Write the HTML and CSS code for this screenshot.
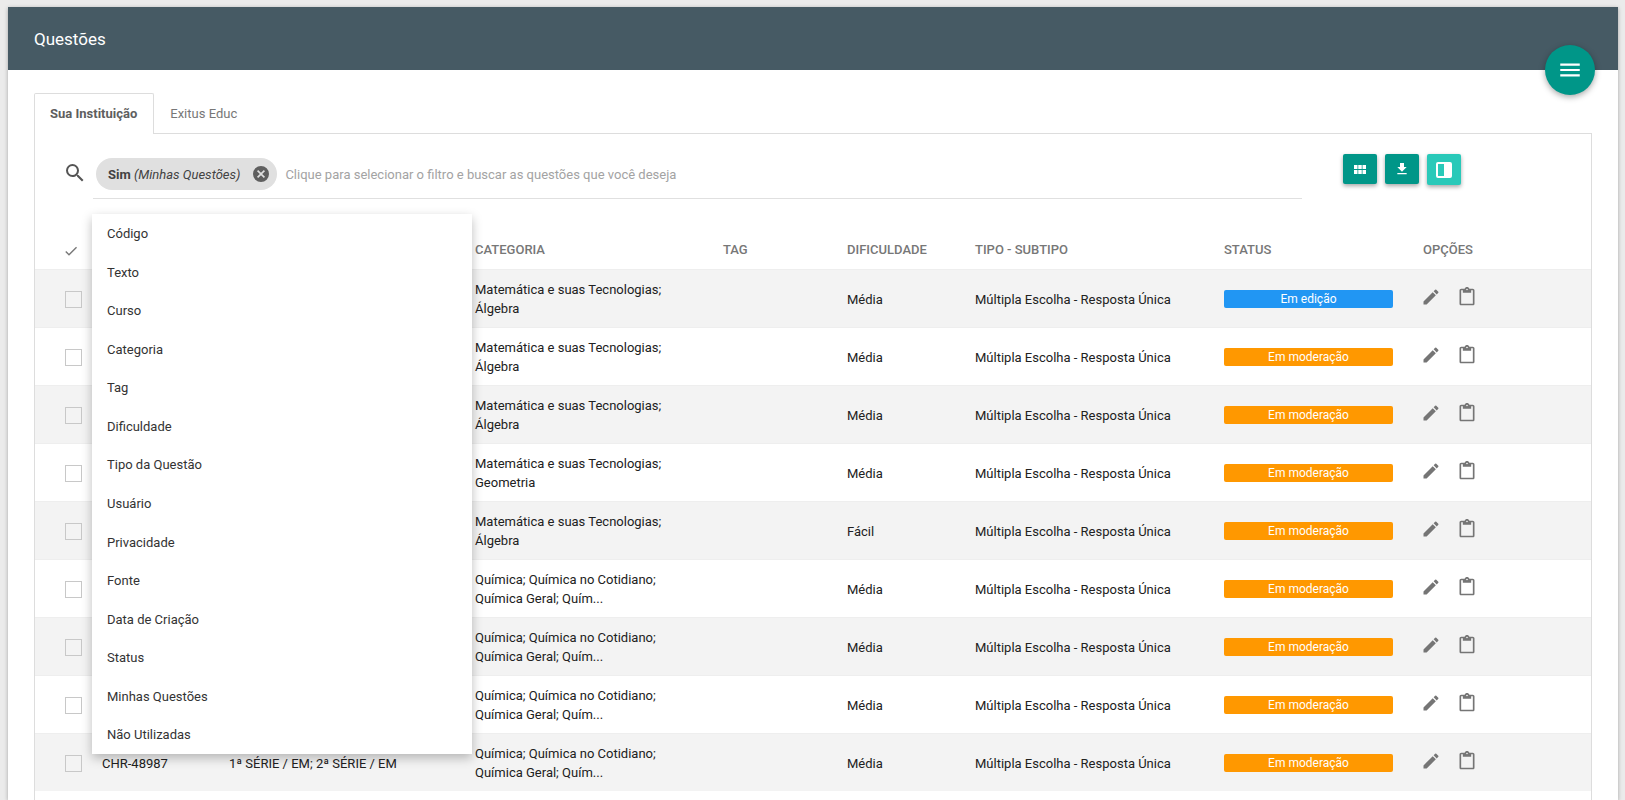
FILE: index.html
```html
<!DOCTYPE html>
<html lang="pt-BR">
<head>
<meta charset="utf-8">
<title>Questões</title>
<link rel="stylesheet" href="styles.css">
</head>
<body>
<svg class="sprite" aria-hidden="true">
  <symbol id="i-menu" viewBox="0 0 24 24"><path d="M3 18h18v-2H3v2zm0-5h18v-2H3v2zm0-7v2h18V6H3z"/></symbol>
  <symbol id="i-search" viewBox="0 0 24 24"><path d="M15.5 14h-.79l-.28-.27A6.471 6.471 0 0 0 16 9.5 6.5 6.5 0 1 0 9.5 16c1.61 0 3.09-.59 4.23-1.57l.27.28v.79l5 4.99L20.49 19l-4.99-5zm-6 0C7.01 14 5 11.99 5 9.5S7.01 5 9.5 5 14 7.01 14 9.5 11.99 14 9.5 14z"/></symbol>
  <symbol id="i-close" viewBox="0 0 24 24"><path d="M12 0a12 12 0 1 0 0 24 12 12 0 0 0 0-24zm6 16.3L16.3 18 12 13.7 7.7 18 6 16.3l4.3-4.3L6 7.7 7.7 6l4.3 4.3L16.3 6 18 7.7 13.7 12z"/></symbol>
  <symbol id="i-check" viewBox="0 0 24 24"><path d="M9 16.17L4.83 12l-1.42 1.41L9 19 21 7l-1.41-1.41z"/></symbol>
  <symbol id="i-grid" viewBox="0 0 12 9"><path d="M0 0h3.5v4H0zM4.25 0h3.5v4h-3.5zM8.5 0H12v4H8.5zM0 5h3.5v4H0zM4.25 5h3.5v4h-3.5zM8.5 5H12v4H8.5z"/></symbol>
  <symbol id="i-download" viewBox="0 0 24 24"><path d="M19 9h-4V3H9v6H5l7 7 7-7zM5 18v2h14v-2H5z"/></symbol>
  <symbol id="i-split" viewBox="0 0 16 16"><path d="M2 0h12a2 2 0 0 1 2 2v12a2 2 0 0 1-2 2H2a2 2 0 0 1-2-2V2a2 2 0 0 1 2-2zm0 2v12h6V2z" fill-rule="evenodd"/></symbol>
  <symbol id="i-edit" viewBox="0 0 24 24"><path d="M3 17.25V21h3.75L17.81 9.94l-3.75-3.75L3 17.25zM20.71 7.04a.996.996 0 0 0 0-1.41l-2.34-2.34a.996.996 0 0 0-1.41 0l-1.83 1.83 3.75 3.75 1.83-1.83z"/></symbol>
  <symbol id="i-clip" viewBox="0 0 24 24"><path d="M19 2h-4.18C14.4.84 13.3 0 12 0c-1.3 0-2.4.84-2.82 2H5c-1.1 0-2 .9-2 2v16c0 1.1.9 2 2 2h14c1.1 0 2-.9 2-2V4c0-1.1-.9-2-2-2zm-7 0c.55 0 1 .45 1 1s-.45 1-1 1-1-.45-1-1 .45-1 1-1zm7 18H5V4h2v3h10V4h2v16z"/></symbol>
</svg>
<main class="card">
  <header class="card-header">
    <h1 class="title">Questões</h1>
    <button class="fab" type="button" aria-label="Menu"><svg class="fab-icon"><use href="#i-menu"/></svg></button>
  </header>
  <div class="card-body">
    <nav class="tabs">
      <a class="tab tab-active" href="#instituicao">Sua Instituição</a>
      <a class="tab" href="#exitus">Exitus Educ</a>
    </nav>
    <section class="panel" id="instituicao">
      <div class="toolbar">
        <label class="search-label" for="filtro" aria-label="Buscar"><svg class="search-icon"><use href="#i-search"/></svg></label>
        <div class="field">
          <span class="chip"><span><strong>Sim</strong> <em>(Minhas Questões)</em></span><button class="chip-close" type="button" aria-label="Remover"><svg class="chip-icon"><use href="#i-close"/></svg></button></span>
          <input class="filter" id="filtro" type="text" placeholder="Clique para selecionar o filtro e buscar as questões que você deseja">
          <ul class="menu">
            <li><a class="menu-item" href="#">Código</a></li>
            <li><a class="menu-item" href="#">Texto</a></li>
            <li><a class="menu-item" href="#">Curso</a></li>
            <li><a class="menu-item" href="#">Categoria</a></li>
            <li><a class="menu-item" href="#">Tag</a></li>
            <li><a class="menu-item" href="#">Dificuldade</a></li>
            <li><a class="menu-item" href="#">Tipo da Questão</a></li>
            <li><a class="menu-item" href="#">Usuário</a></li>
            <li><a class="menu-item" href="#">Privacidade</a></li>
            <li><a class="menu-item" href="#">Fonte</a></li>
            <li><a class="menu-item" href="#">Data de Criação</a></li>
            <li><a class="menu-item" href="#">Status</a></li>
            <li><a class="menu-item" href="#">Minhas Questões</a></li>
            <li><a class="menu-item" href="#">Não Utilizadas</a></li>
          </ul>
        </div>
        <div class="tools">
          <button class="tool" type="button" aria-label="Grade"><svg class="tool-grid"><use href="#i-grid"/></svg></button>
          <button class="tool" type="button" aria-label="Baixar"><svg class="tool-download"><use href="#i-download"/></svg></button>
          <button class="tool tool-light" type="button" aria-label="Dividir"><svg class="tool-split"><use href="#i-split"/></svg></button>
        </div>
      </div>
      <table class="grid">
        <colgroup><col class="c-check"><col class="c-code"><col class="c-course"><col><col class="c-tag"><col class="c-level"><col class="c-type"><col class="c-status"><col class="c-options"></colgroup>
        <thead>
          <tr><th class="check-head"><svg class="check-icon"><use href="#i-check"/></svg></th><th></th><th></th><th>CATEGORIA</th><th>TAG</th><th>DIFICULDADE</th><th>TIPO - SUBTIPO</th><th>STATUS</th><th>OPÇÕES</th></tr>
        </thead>
        <tbody>
          <tr><td class="check-cell"><input class="check" type="checkbox" aria-label="Selecionar"></td><td></td><td></td><td>Matemática e suas Tecnologias; Álgebra</td><td></td><td>Média</td><td>Múltipla Escolha - Resposta Única</td><td class="status-cell"><span class="badge badge-edit">Em edição</span></td><td class="action-cell"><div class="actions"><button class="action" type="button" aria-label="Editar"><svg class="action-icon"><use href="#i-edit"/></svg></button><button class="action" type="button" aria-label="Copiar"><svg class="action-icon"><use href="#i-clip"/></svg></button></div></td></tr>
          <tr><td class="check-cell"><input class="check" type="checkbox" aria-label="Selecionar"></td><td></td><td></td><td>Matemática e suas Tecnologias; Álgebra</td><td></td><td>Média</td><td>Múltipla Escolha - Resposta Única</td><td class="status-cell"><span class="badge">Em moderação</span></td><td class="action-cell"><div class="actions"><button class="action" type="button" aria-label="Editar"><svg class="action-icon"><use href="#i-edit"/></svg></button><button class="action" type="button" aria-label="Copiar"><svg class="action-icon"><use href="#i-clip"/></svg></button></div></td></tr>
          <tr><td class="check-cell"><input class="check" type="checkbox" aria-label="Selecionar"></td><td></td><td></td><td>Matemática e suas Tecnologias; Álgebra</td><td></td><td>Média</td><td>Múltipla Escolha - Resposta Única</td><td class="status-cell"><span class="badge">Em moderação</span></td><td class="action-cell"><div class="actions"><button class="action" type="button" aria-label="Editar"><svg class="action-icon"><use href="#i-edit"/></svg></button><button class="action" type="button" aria-label="Copiar"><svg class="action-icon"><use href="#i-clip"/></svg></button></div></td></tr>
          <tr><td class="check-cell"><input class="check" type="checkbox" aria-label="Selecionar"></td><td></td><td></td><td>Matemática e suas Tecnologias; Geometria</td><td></td><td>Média</td><td>Múltipla Escolha - Resposta Única</td><td class="status-cell"><span class="badge">Em moderação</span></td><td class="action-cell"><div class="actions"><button class="action" type="button" aria-label="Editar"><svg class="action-icon"><use href="#i-edit"/></svg></button><button class="action" type="button" aria-label="Copiar"><svg class="action-icon"><use href="#i-clip"/></svg></button></div></td></tr>
          <tr><td class="check-cell"><input class="check" type="checkbox" aria-label="Selecionar"></td><td></td><td></td><td>Matemática e suas Tecnologias; Álgebra</td><td></td><td>Fácil</td><td>Múltipla Escolha - Resposta Única</td><td class="status-cell"><span class="badge">Em moderação</span></td><td class="action-cell"><div class="actions"><button class="action" type="button" aria-label="Editar"><svg class="action-icon"><use href="#i-edit"/></svg></button><button class="action" type="button" aria-label="Copiar"><svg class="action-icon"><use href="#i-clip"/></svg></button></div></td></tr>
          <tr><td class="check-cell"><input class="check" type="checkbox" aria-label="Selecionar"></td><td></td><td></td><td>Química; Química no Cotidiano; Química Geral; Quím...</td><td></td><td>Média</td><td>Múltipla Escolha - Resposta Única</td><td class="status-cell"><span class="badge">Em moderação</span></td><td class="action-cell"><div class="actions"><button class="action" type="button" aria-label="Editar"><svg class="action-icon"><use href="#i-edit"/></svg></button><button class="action" type="button" aria-label="Copiar"><svg class="action-icon"><use href="#i-clip"/></svg></button></div></td></tr>
          <tr><td class="check-cell"><input class="check" type="checkbox" aria-label="Selecionar"></td><td></td><td></td><td>Química; Química no Cotidiano; Química Geral; Quím...</td><td></td><td>Média</td><td>Múltipla Escolha - Resposta Única</td><td class="status-cell"><span class="badge">Em moderação</span></td><td class="action-cell"><div class="actions"><button class="action" type="button" aria-label="Editar"><svg class="action-icon"><use href="#i-edit"/></svg></button><button class="action" type="button" aria-label="Copiar"><svg class="action-icon"><use href="#i-clip"/></svg></button></div></td></tr>
          <tr><td class="check-cell"><input class="check" type="checkbox" aria-label="Selecionar"></td><td></td><td></td><td>Química; Química no Cotidiano; Química Geral; Quím...</td><td></td><td>Média</td><td>Múltipla Escolha - Resposta Única</td><td class="status-cell"><span class="badge">Em moderação</span></td><td class="action-cell"><div class="actions"><button class="action" type="button" aria-label="Editar"><svg class="action-icon"><use href="#i-edit"/></svg></button><button class="action" type="button" aria-label="Copiar"><svg class="action-icon"><use href="#i-clip"/></svg></button></div></td></tr>
          <tr><td class="check-cell"><input class="check" type="checkbox" aria-label="Selecionar"></td><td>CHR-48987</td><td>1ª SÉRIE / EM; 2ª SÉRIE / EM</td><td>Química; Química no Cotidiano; Química Geral; Quím...</td><td></td><td>Média</td><td>Múltipla Escolha - Resposta Única</td><td class="status-cell"><span class="badge">Em moderação</span></td><td class="action-cell"><div class="actions"><button class="action" type="button" aria-label="Editar"><svg class="action-icon"><use href="#i-edit"/></svg></button><button class="action" type="button" aria-label="Copiar"><svg class="action-icon"><use href="#i-clip"/></svg></button></div></td></tr>
        </tbody>
      </table>
    </section>
  </div>
</main>
</body>
</html>
```
FILE: styles.css
```css
* { box-sizing: border-box; }

body {
  margin: 0;
  min-height: 100vh;
  padding: 7px 7px 0 8px;
  display: flex;
  flex-direction: column;
  background: #ebebeb;
  color: #212121;
  font: 13px/19px Roboto, sans-serif;
}

button {
  margin: 0;
  padding: 0;
  border: 0;
  background: none;
  cursor: pointer;
}

a { text-decoration: none; }

svg {
  display: block;
  fill: currentColor;
}

.sprite {
  position: absolute;
  width: 0;
  height: 0;
}

.card {
  flex: 1;
  display: flex;
  flex-direction: column;
  background: #fff;
  box-shadow: 0 1px 4px rgba(0, 0, 0, .3);
}

.card-header {
  position: relative;
  padding: 21px 26px 19px;
  background: #465a64;
  color: #fff;
}

.title {
  margin: 0;
  font-size: 17px;
  font-weight: 400;
  line-height: 23px;
}

.fab {
  position: absolute;
  right: 23px;
  bottom: -25px;
  width: 50px;
  height: 50px;
  display: grid;
  place-items: center;
  border-radius: 50%;
  background: #009688;
  color: #fff;
  box-shadow: 0 2px 6px rgba(0, 0, 0, .35);
}

.fab-icon { width: 26px; height: 26px; }

.card-body {
  flex: 1;
  display: flex;
  flex-direction: column;
  padding: 23px 26px 0;
}

.tabs { display: flex; }

.tab {
  padding: 10px 16px 10px 15px;
  border: 1px solid transparent;
  border-bottom: 0;
  color: #777;
}

.tab-active {
  position: relative;
  z-index: 1;
  margin-bottom: -1px;
  padding-bottom: 11px;
  border-color: #ddd;
  border-radius: 2px 2px 0 0;
  background: #fff;
  color: #5e5e5e;
  font-weight: 700;
}

.panel {
  flex: 1;
  border: 1px solid #ddd;
  border-bottom: 0;
}

.toolbar {
  display: flex;
  align-items: flex-start;
  padding: 20px 130px 0 28px;
}

.search-label { padding: 7px 6px 0 0; }

.search-icon {
  width: 24px;
  height: 24px;
  color: #555;
}

.field {
  position: relative;
  flex: 1;
  display: flex;
  align-items: center;
  gap: 8px;
  margin-right: 41px;
  padding: 4px 0 8px 3px;
  border-bottom: 1px solid #e0e0e0;
}

.chip {
  display: flex;
  align-items: center;
  gap: 13px;
  height: 32px;
  padding: 0 8px 0 12px;
  border-radius: 16px;
  background: #e0e0e0;
  color: #424242;
  white-space: nowrap;
}

.chip-close { color: #5f5f5f; }

.chip-icon { width: 16px; height: 16px; }

.filter {
  flex: 1;
  min-width: 0;
  padding: 0;
  border: 0;
  outline: 0;
  background: none;
  font: inherit;
}

.filter::placeholder { color: #a3a3a3; }

.menu {
  position: absolute;
  z-index: 2;
  top: 60px;
  left: -1px;
  width: 380px;
  min-height: 540px;
  display: grid;
  grid-auto-rows: 1fr;
  margin: 0;
  padding: 0;
  list-style: none;
  background: #fff;
  box-shadow: 0 4px 10px rgba(0, 0, 0, .26);
}

.menu-item {
  display: block;
  padding: 10px 15px 9px;
  color: #333;
}

.tools {
  display: flex;
  align-items: flex-start;
  gap: 8px;
}

.tool {
  width: 34px;
  height: 30px;
  display: grid;
  place-items: center;
  border-radius: 2px;
  background: #009688;
  color: #fff;
  box-shadow: 0 2px 4px rgba(0, 0, 0, .35);
}

.tool-light {
  height: 31px;
  background: #29c9b9;
}

.tool-grid { width: 12px; height: 9px; }

.tool-download { width: 16px; height: 16px; }

.tool-split { width: 16px; height: 16px; }

.grid {
  width: 100%;
  table-layout: fixed;
  border-spacing: 0;
}

.c-check { width: 57px; }
.c-code { width: 127px; }
.c-course { width: 246px; }
.c-tag { width: 124px; }
.c-level { width: 128px; }
.c-type { width: 249px; }
.c-status { width: 199px; }
.c-options { width: 178px; }

.grid th {
  height: 70px;
  padding: 0 10px 10px;
  color: #777;
  font-weight: 500;
  text-align: left;
  vertical-align: bottom;
}

.grid td {
  height: 58px;
  padding: 10px 10px 9px;
  border-top: 1px solid #eee;
  vertical-align: middle;
}

.grid tbody tr:nth-child(odd) { background: #f3f3f3; }

.grid .check-head { padding-left: 28px; padding-right: 0; }

.grid .check-cell { padding-left: 30px; padding-right: 0; }

.grid .status-cell { padding-right: 20px; }

.grid .action-cell { padding: 8px 8px 11px; }

.check-icon { width: 16px; height: 16px; }

.check {
  display: block;
  appearance: none;
  width: 17px;
  height: 17px;
  margin: 0;
  border: 1px solid #c8c8c8;
}

.badge {
  display: block;
  border-radius: 2px;
  background: #ff9800;
  color: #fff;
  font-size: 12px;
  line-height: 18px;
  text-align: center;
}

.badge-edit { background: #2196f3; }

.actions { display: flex; gap: 16px; }

.action { color: #757575; }

.action-icon { width: 20px; height: 20px; }
```
